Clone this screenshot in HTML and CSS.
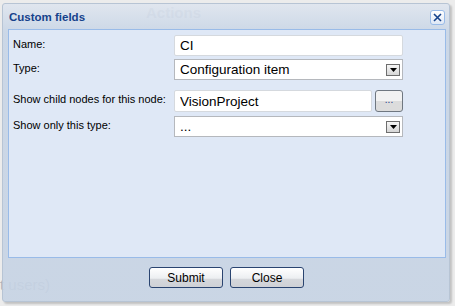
FILE: index.html
```html
<!DOCTYPE html>
<html lang="en">
<head>
    <meta charset="UTF-8">
    <title>Custom fields</title>
    <link rel="stylesheet" href="styles.css">
</head>
<body>
    <div class="page">
        <div class="page-head">Actions</div>
        <div class="page-row">t users)</div>
    </div>

    <div class="window">
        <div class="window-header">
            <span class="window-title">Custom fields</span>
            <button class="tool-close" title="Close">
                <svg width="9" height="9" viewBox="0 0 9 9"><path d="M1 1L8 8M8 1L1 8" stroke="#15428b" stroke-width="1.6"/></svg>
            </button>
        </div>
        <div class="window-body">
            <div class="field-row">
                <label>Name:</label>
                <input class="text" type="text" value="CI">
            </div>
            <div class="field-row">
                <label>Type:</label>
                <div class="combo">
                    <span>Configuration item</span>
                    <span class="trigger"><svg width="7" height="4" viewBox="0 0 7 4"><path d="M0 0H7L3.5 4Z" fill="#000"/></svg></span>
                </div>
            </div>
            <div class="field-row spaced">
                <label>Show child nodes for this node:</label>
                <input class="text short" type="text" value="VisionProject">
                <button class="dots">...</button>
            </div>
            <div class="field-row">
                <label>Show only this type:</label>
                <div class="combo">
                    <span>...</span>
                    <span class="trigger"><svg width="7" height="4" viewBox="0 0 7 4"><path d="M0 0H7L3.5 4Z" fill="#000"/></svg></span>
                </div>
            </div>
        </div>
        <div class="window-footer">
            <button class="btn">Submit</button>
            <button class="btn">Close</button>
        </div>
    </div>
</body>
</html>
```

FILE: styles.css
```css
body {
    margin: 0;
    background-color: #ececec;
    font-family: "Liberation Sans", Arial, sans-serif;
    width: 455px;
    height: 306px;
    overflow: hidden;
    position: relative;
}
.page-head {
    margin-left: 146px;
    padding-top: 4px;
    font-weight: bold;
    font-size: 15px;
    color: #b9bec6;
}
.page-row {
    margin-top: 255px;
    font-size: 15px;
    color: #aeb3bb;
}
.window {
    position: absolute;
    left: 2px;
    top: 3px;
    width: 446px;
    height: 297px;
    border: 1px solid #b7c4d4;
    border-radius: 3px;
    background: linear-gradient(rgba(222, 229, 239, 0.86), rgba(200, 213, 230, 0.9) 28px, rgba(198, 211, 228, 0.9));
    box-shadow: 2px 2px 2px rgba(0, 0, 0, 0.18);
    display: flex;
    flex-direction: column;
}
.window-header {
    display: flex;
    align-items: center;
    justify-content: space-between;
    height: 25px;
    padding: 0 4px 0 6px;
}
.window-title {
    font-weight: bold;
    font-size: 11.5px;
    color: #15428b;
    padding-top: 1px;
}
.tool-close {
    width: 15px;
    height: 15px;
    margin-top: 2px;
    padding: 0;
    display: flex;
    align-items: center;
    justify-content: center;
    background: linear-gradient(#ffffff, #dfe8f6);
    border: 1px solid #99bbe8;
    border-radius: 3px;
}
.window-body {
    margin: 0 3px 0 5px;
    height: 229px;
    background-color: #dfe8f6;
    border: 1px solid #99bbe8;
    padding: 5px 0 0 4px;
    box-sizing: border-box;
}
.field-row {
    display: flex;
    align-items: center;
    margin-bottom: 3px;
}
.field-row.spaced {
    margin-top: 10px;
    margin-bottom: 4px;
}
label {
    width: 161px;
    font-size: 11px;
    color: #000;
    align-self: flex-start;
    padding-top: 3px;
}
.text {
    width: 229px;
    height: 21px;
    box-sizing: border-box;
    border: 1px solid #d5d9de;
    border-radius: 2px;
    padding: 2px 5px;
    font-family: "Liberation Sans", Arial, sans-serif;
    font-size: 13.5px;
    background: #fff;
    margin: 0;
}
.text.short {
    width: 198px;
    height: 22px;
}
.combo {
    width: 229px;
    height: 21px;
    box-sizing: border-box;
    border: 1px solid #b5b8bd;
    background: #fff;
    display: flex;
    align-items: center;
    justify-content: space-between;
    padding-left: 5px;
    font-size: 13.5px;
}
.trigger {
    width: 14px;
    height: 12px;
    margin-right: 2px;
    border: 1px solid #6e6e6e;
    background: linear-gradient(#f6f6f6, #d6d6d6);
    display: flex;
    align-items: center;
    justify-content: center;
    box-sizing: border-box;
}
.dots {
    width: 28px;
    height: 22px;
    margin-left: 3px;
    padding: 0 0 4px;
    border: 1px solid #6f7780;
    border-radius: 3px;
    background: linear-gradient(#f2f2f2 50%, #dcdcdc 50%);
    font-family: "Liberation Sans", Arial, sans-serif;
    font-size: 10px;
    color: #1f3f8a;
}
.window-footer {
    display: flex;
    justify-content: center;
    gap: 7px;
    padding-top: 9px;
    padding-left: 1px;
}
.btn {
    width: 74px;
    height: 21px;
    border: 1px solid #2a4470;
    border-radius: 3px;
    background: linear-gradient(#ffffff, #eceef1 55%, #d6d8dc 56%, #cfd1d6);
    font-family: "Liberation Sans", Arial, sans-serif;
    font-size: 12px;
    color: #000;
    padding: 0;
}
```
